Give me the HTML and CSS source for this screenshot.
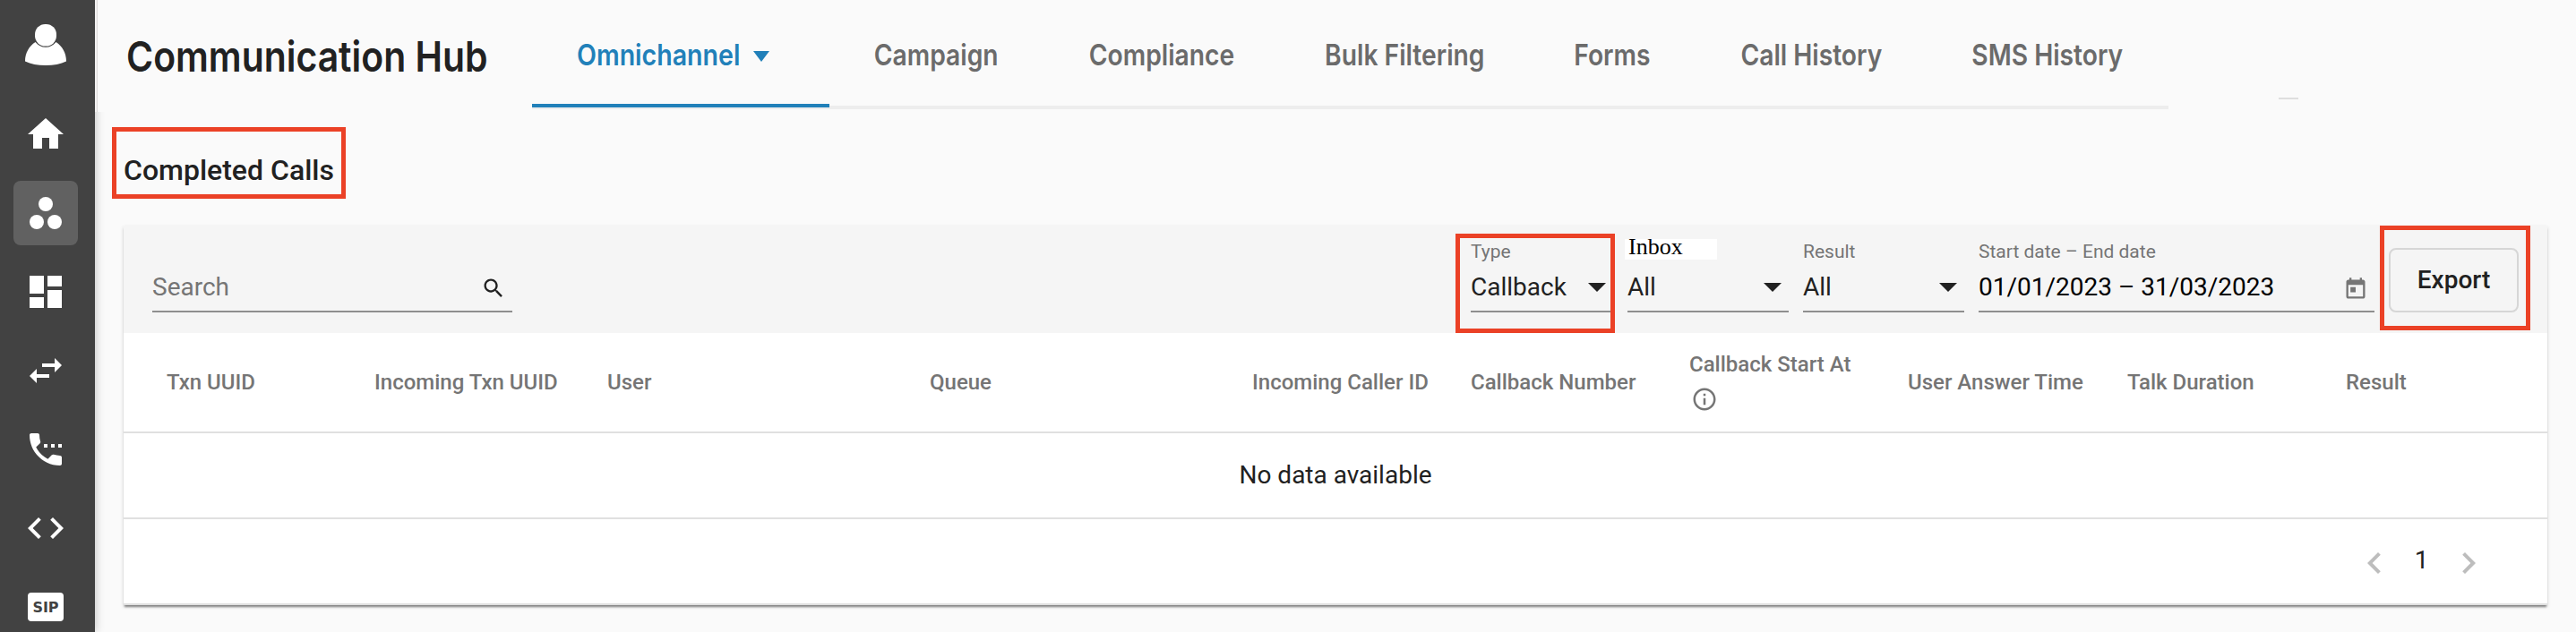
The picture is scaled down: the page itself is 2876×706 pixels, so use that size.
FILE: index.html
```html
<!DOCTYPE html>
<html lang="en">
<head>
    <meta charset="UTF-8">
    <meta name="viewport" content="width=device-width, initial-scale=1.0">
    <title>Communication Hub</title>
    <link rel="stylesheet" href="styles.css">
</head>
<body>
    <div class="app">
        <div class="sidebar">
            <a href="#" class="avatar">
                <svg width="48" height="48" viewBox="0 0 48 48">
                    <path d="M12.500 22C5.500 26.500 1 34 1 43.500 7.500 46.500 15 48 24 48s16.500-1.500 23-4.500C47 34 42.500 26.500 35.500 22 32.500 25.800 28.500 27.800 24 27.800S15.500 25.800 12.500 22z"/>
                    <rect x="12" y="2" width="24" height="24.500" rx="11.500"/>
                </svg>
            </a>
            <ul class="menu">
                <li><svg viewBox="0 0 24 24"><path d="M10 20v-6h4v6h5v-8h3L12 3 2 12h3v8z"/></svg></li>
                <li class="on"><svg viewBox="0 0 24 24"><circle cx="12" cy="7" r="4"/><circle cx="7" cy="17" r="4"/><circle cx="17" cy="17" r="4"/></svg></li>
                <li><svg viewBox="0 0 24 24"><path d="M3 13h8V3H3v10zm0 8h8v-6H3v6zm10 0h8V11h-8v10zm0-18v6h8V3h-8z"/></svg></li>
                <li><svg viewBox="0 0 24 24"><path d="M6.990 11L3 15l3.990 4v-3H14v-2H6.990v-3zM21 9l-3.990-4v3H10v2h7.010v3L21 9z"/></svg></li>
                <li><svg viewBox="0 0 24 24"><path d="M11 9h2v2h-2V9zm4 0h2v2h-2V9zm5 6.500c-1.250 0-2.450-.2-3.570-.57-.35-.11-.74-.03-1.020.24l-2.200 2.200c-2.830-1.440-5.140-3.750-6.590-6.580l2.200-2.210c.28-.27.36-.66.25-1.010C8.700 6.450 8.500 5.250 8.500 4c0-.55-.45-1-1-1H4c-.55 0-1 .45-1 1 0 9.390 7.610 17 17 17 .55 0 1-.45 1-1v-3.500c0-.55-.45-1-1-1zM19 9v2h2V9h-2z"/></svg></li>
                <li><svg viewBox="0 0 24 24"><path d="M9.400 16.600L4.800 12l4.600-4.600L8 6l-6 6 6 6 1.400-1.400zm5.200 0l4.600-4.600-4.600-4.600L16 6l6 6-6 6-1.400-1.400z"/></svg></li>
                <li><span class="sip">SIP</span></li>
            </ul>
        </div>
        <div class="main">
            <div class="header">
                <h1 class="brand"><span>Communication Hub</span></h1>
                <ul class="tabs">
                    <li class="on"><span>Omnichannel</span><i class="caret"></i></li>
                    <li><span>Campaign</span></li>
                    <li><span>Compliance</span></li>
                    <li><span>Bulk Filtering</span></li>
                    <li><span>Forms</span></li>
                    <li><span>Call History</span></li>
                    <li><span>SMS History</span></li>
                </ul>
                <div class="dash"></div>
            </div>
            <h2 class="title">Completed Calls</h2>
            <div class="card">
                <div class="filters">
                    <div class="field search">
                        <span class="placeholder">Search</span>
                        <svg width="28" height="28" viewBox="0 0 24 24"><path d="M15.500 14h-.79l-.28-.27C15.410 12.590 16 11.110 16 9.500 16 5.910 13.090 3 9.500 3S3 5.910 3 9.500 5.910 16 9.500 16c1.610 0 3.090-.59 4.230-1.570l.27.28v.79l5 4.990L20.490 19l-4.990-5zm-6 0C7.010 14 5 11.990 5 9.500S7.010 5 9.500 5 14 7.010 14 9.500 11.990 14 9.500 14z"/></svg>
                    </div>
                    <div class="field type">
                        <label>Type</label>
                        <span>Callback</span>
                        <i class="caret"></i>
                    </div>
                    <div class="field inbox">
                        <label class="patch">Inbox</label>
                        <span>All</span>
                        <i class="caret"></i>
                    </div>
                    <div class="field result">
                        <label>Result</label>
                        <span>All</span>
                        <i class="caret"></i>
                    </div>
                    <div class="field date">
                        <label>Start date – End date</label>
                        <span>01/01/2023 – 31/03/2023</span>
                        <svg width="28" height="28" viewBox="0 0 24 24"><path d="M19 3h-1V1h-2v2H8V1H6v2H5c-1.110 0-1.990.9-1.990 2L3 19c0 1.100.89 2 2 2h14c1.100 0 2-.9 2-2V5c0-1.100-.9-2-2-2zm0 16H5V8h14v11zM7 10h5v5H7z"/></svg>
                    </div>
                    <button class="export">Export</button>
                </div>
                <div class="thead">
                    <div>Txn UUID</div>
                    <div>Incoming Txn UUID</div>
                    <div>User</div>
                    <div>Queue</div>
                    <div>Incoming Caller ID</div>
                    <div>Callback Number</div>
                    <div class="start">
                        Callback Start At
                        <svg width="30" height="30" viewBox="0 0 24 24"><path d="M11 17h2v-6h-2v6zm1-15C6.480 2 2 6.480 2 12s4.480 10 10 10 10-4.480 10-10S17.520 2 12 2zm0 18c-4.410 0-8-3.590-8-8s3.590-8 8-8 8 3.590 8 8-3.590 8-8 8zM11 9h2V7h-2v2z"/></svg>
                    </div>
                    <div>User Answer Time</div>
                    <div>Talk Duration</div>
                    <div>Result</div>
                </div>
                <div class="empty">No data available</div>
                <div class="pager">
                    <svg width="48" height="48" viewBox="0 0 24 24"><path d="M15.410 7.410L14 6l-6 6 6 6 1.410-1.410L10.830 12z"/></svg>
                    <span>1</span>
                    <svg width="48" height="48" viewBox="0 0 24 24"><path d="M10 6L8.590 7.410 13.170 12l-4.580 4.590L10 18l6-6z"/></svg>
                </div>
            </div>
        </div>
        <!-- highlight frames -->
        <div class="mark mark-title"></div>
        <div class="mark mark-type"></div>
        <div class="mark mark-export"></div>
    </div>
</body>
</html>
```
FILE: styles.css
```css
* {
    margin: 0;
    padding: 0;
    box-sizing: border-box;
}
body {
    background-color: #fafafa;
    color: #212121;
    font-family: Roboto, "Liberation Sans", sans-serif;
    font-size: 28px;
}
ul > li {
    list-style: none;
}
.app {
    position: relative;
    display: flex;
    width: 2876px;
    height: 706px;
    overflow: hidden;
}

/* sidebar */
.sidebar {
    width: 106px;
    background-color: #424242;
    box-shadow: 0 0 10px rgba(0, 0, 0, 0.25);
    padding-right: 4px;
}
.sidebar svg {
    fill: #fff;
}
.avatar {
    display: block;
    width: 48px;
    height: 48px;
    margin: 25px auto 41px;
}
.menu {
    display: flex;
    flex-direction: column;
    align-items: center;
    gap: 16px;
}
.menu li {
    display: flex;
    align-items: center;
    justify-content: center;
    width: 72px;
    height: 72px;
    border-radius: 8px;
    flex-shrink: 0;
}
.menu li.on {
    background-color: #616161;
}
.menu svg {
    width: 48px;
    height: 48px;
}
.sip {
    width: 40px;
    height: 32px;
    border-radius: 4px;
    background-color: #fff;
    color: #424242;
    font: bold 16px/33px "DejaVu Sans", sans-serif;
    text-align: center;
}

/* header */
.main {
    flex: 1;
}
.header {
    display: flex;
    height: 125px;
    background-color: #fafafa;
    border-left: 2px solid #f3f1f1;
    box-shadow: inset 1px 0 0 #dedada;
}
.brand {
    width: 486px;
    padding: 33px 0 0 33px;
    font: 600 47px/60px Inter, "Liberation Sans", sans-serif;
    white-space: nowrap;
}
.brand span {
    display: inline-block;
    transform: scaleX(0.87);
    transform-origin: left;
}
.tabs {
    display: grid;
    grid-template-columns: 332px 239px 264px 278px 186px 258px 270px;
    height: 122px;
    border-bottom: 4px solid #ededed;
}
.tabs li {
    display: flex;
    justify-content: center;
    height: 120px;
    padding-top: 41px;
    color: #6b6b6b;
    font: 600 33px/40px Inter, "Liberation Sans", sans-serif;
    white-space: nowrap;
}
.tabs span {
    transform: scaleX(0.855);
}
.tabs .on {
    justify-content: flex-start;
    padding-left: 50px;
    border-bottom: 4px solid #2180b9;
    color: #2180b9;
}
.tabs .on span {
    width: 180px;
    transform: scaleX(0.865);
    transform-origin: left;
}
.caret {
    border: 10px solid transparent;
    border-top-color: #212121;
    border-bottom: 0;
}
.tabs .caret {
    height: 12px;
    margin: 16px 0 0 17px;
    border-width: 12px 9px 0;
    border-top-color: #2180b9;
}
.dash {
    width: 22px;
    height: 2px;
    margin: 109px 0 0 123px;
    background-color: #dedede;
}
.title {
    height: 127px;
    padding: 46px 0 0 32px;
    font-size: 32px;
    font-weight: 500;
    line-height: 38px;
}

/* table card */
.card {
    width: 2706px;
    height: 424px;
    margin-left: 32px;
    background-color: #fff;
    box-shadow: 0 3px 2px -1px rgba(0, 0, 0, 0.4), 0 2px 4px rgba(0, 0, 0, 0.16);
}
.filters {
    display: flex;
    height: 120px;
    padding-left: 32px;
    background-color: #f5f5f5;
}
.field {
    position: relative;
    display: flex;
    justify-content: space-between;
    height: 97px;
    padding-top: 52px;
    border-bottom: 2px solid #8f8f8f;
    line-height: 33px;
}
.field label {
    position: absolute;
    top: 16px;
    left: 0;
    color: #757575;
    font-size: 21px;
    line-height: 26px;
    white-space: nowrap;
}
.field .caret {
    margin: 12px 8px 0 0;
    height: 10px;
}
.search {
    width: 402px;
    margin-right: 1070px;
}
.search svg {
    margin: 4px 7px 0 0;
    fill: #212121;
}
.placeholder {
    color: #757575;
}
.type {
    width: 159px;
    margin-right: 16px;
}
.inbox, .result {
    width: 180px;
    margin-right: 16px;
}
.field .patch {
    top: 15px;
    left: -3px;
    width: 103px;
    height: 23px;
    padding-left: 4px;
    background-color: #fff;
    color: #000;
    font: 26px/17px "Liberation Serif", serif;
}
.date {
    width: 442px;
    margin-right: 16px;
    color: #000;
}
.date svg {
    margin: 5px 7px 0 0;
    fill: #757575;
}
.export {
    width: 145px;
    height: 72px;
    margin-top: 25px;
    padding-bottom: 2px;
    border: 2px solid #d6d6d6;
    border-radius: 8px;
    background: none;
    color: #212121;
    font: 500 28px Roboto, sans-serif;
}
.thead {
    display: grid;
    grid-template-columns: 232px 260px 360px 360px 244px 244px 244px 245px 244px 1fr;
    align-items: center;
    height: 112px;
    padding-left: 48px;
    border-bottom: 2px solid #e0e0e0;
    color: #757575;
    font-size: 24px;
    font-weight: 500;
    line-height: 40px;
}
.start {
    padding-bottom: 6px;
}
.start svg {
    display: block;
    margin-left: 2px;
    margin-top: 4px;
    fill: #757575;
}
.empty {
    height: 96px;
    border-bottom: 2px solid #e0e0e0;
    line-height: 94px;
    text-align: center;
}
.pager {
    display: flex;
    justify-content: flex-end;
    height: 96px;
    padding: 25px 64px 0 0;
    border-bottom: 2px solid #e0e0e0;
}
.pager svg {
    fill: #bdbdbd;
}
.pager span {
    width: 57px;
    line-height: 42px;
    text-align: center;
}

/* red frames over the page */
.mark {
    position: absolute;
    border: 5px solid #eb4126;
}
.mark-title {
    left: 125px;
    top: 142px;
    width: 261px;
    height: 80px;
}
.mark-type {
    left: 1625px;
    top: 261px;
    width: 178px;
    height: 111px;
}
.mark-export {
    left: 2657px;
    top: 252px;
    width: 168px;
    height: 117px;
}
```
